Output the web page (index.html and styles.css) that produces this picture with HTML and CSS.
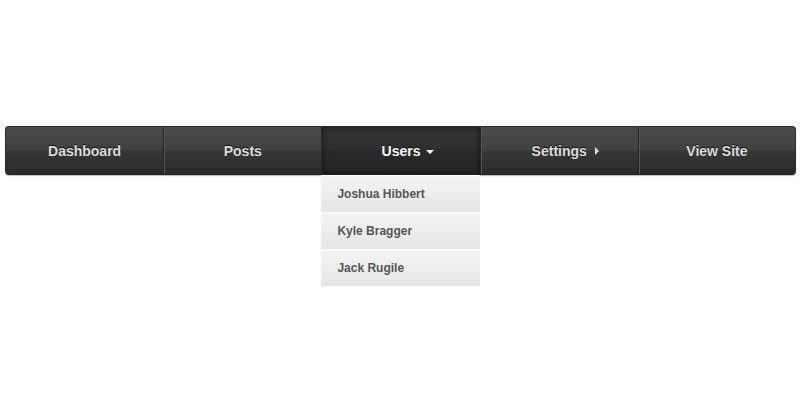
FILE: index.html
```html
<!DOCTYPE html>
<html>
<head>
<meta charset="utf-8">
<link rel="stylesheet" href="styles.css">
</head>
<body>
<nav class="nav">
  <ul class="menu">
    <li class="item"><a class="link" href="#">Dashboard</a></li>
    <li class="item"><a class="link" href="#">Posts</a></li>
    <li class="item active"><a class="link" href="#"><span class="label">Users<span class="caret-down"></span></span></a>
      <ul class="dropdown">
        <li><a class="sub" href="#">Joshua Hibbert</a></li>
        <li><a class="sub" href="#">Kyle Bragger</a></li>
        <li><a class="sub" href="#">Jack Rugile</a></li>
      </ul>
    </li>
    <li class="item"><a class="link" href="#"><span class="label">Settings<span class="caret-right"></span></span></a></li>
    <li class="item"><a class="link" href="#">View Site</a></li>
  </ul>
</nav>
</body>
</html>
```
FILE: styles.css
```css
html, body {
  margin: 0;
  padding: 0;
  background: #fff;
  font-family: "Liberation Sans", Arial, sans-serif;
}
.nav {
  padding: 126px 4px 0 5px;
}
.menu {
  list-style: none;
  margin: 0;
  padding: 0;
  display: flex;
  align-items: flex-start;
  width: 791px;
}
.item {
  flex: 1;
  min-width: 0;
}
.link {
  display: flex;
  align-items: center;
  justify-content: center;
  box-sizing: border-box;
  height: 49px;
  border-top: 1px solid #2a2a2a;
  border-bottom: 1px solid #222;
  border-left: 1px solid #222;
  background: linear-gradient(to bottom, #4b4b4b 0%, #414141 48%, #363636 52%, #2a2a2a 100%);
  box-shadow: inset 1px 0 0 #575757, 0 1px 1px rgba(0,0,0,0.25);
  color: #dcdcdc;
  font-weight: bold;
  font-size: 14px;
  text-decoration: none;
  text-shadow: 0 -1px 0 #111;
}
.item:first-child .link {
  border-left: 1px solid #2a2a2a;
  border-radius: 4px 0 0 4px;
  box-shadow: 0 1px 1px rgba(0,0,0,0.25);
}
.item:last-child .link {
  border-right: 1px solid #2a2a2a;
  border-radius: 0 4px 4px 0;
}
.label {
  position: relative;
}
.active .link {
  color: #fff;
  border-left: 1px solid #2a2a2a;
  background: linear-gradient(to bottom, #333 0%, #2f2f2f 48%, #2a2a2a 52%, #252525 100%);
  box-shadow: inset 0 0 6px rgba(0,0,0,0.6);
}
.caret-down {
  position: absolute;
  left: calc(100% + 6px);
  top: 7px;
  width: 0;
  height: 0;
  border-left: 4px solid transparent;
  border-right: 4px solid transparent;
  border-top: 4px solid #fff;
}
.caret-right {
  position: absolute;
  left: calc(100% + 8px);
  top: 4px;
  width: 0;
  height: 0;
  border-top: 4px solid transparent;
  border-bottom: 4px solid transparent;
  border-left: 4px solid #ddd;
}
.dropdown {
  list-style: none;
  margin: 1px 0 0;
  padding: 0;
  display: flex;
  flex-direction: column;
  gap: 1px;
}
.sub {
  display: block;
  height: 36px;
  line-height: 36px;
  padding-left: 16px;
  font-size: 12px;
  font-weight: bold;
  color: #555;
  text-decoration: none;
  background: linear-gradient(to bottom, #f3f3f3 0%, #ededed 50%, #e5e5e5 100%);
  box-shadow: inset 0 1px 0 #f7f7f7;
}
```
